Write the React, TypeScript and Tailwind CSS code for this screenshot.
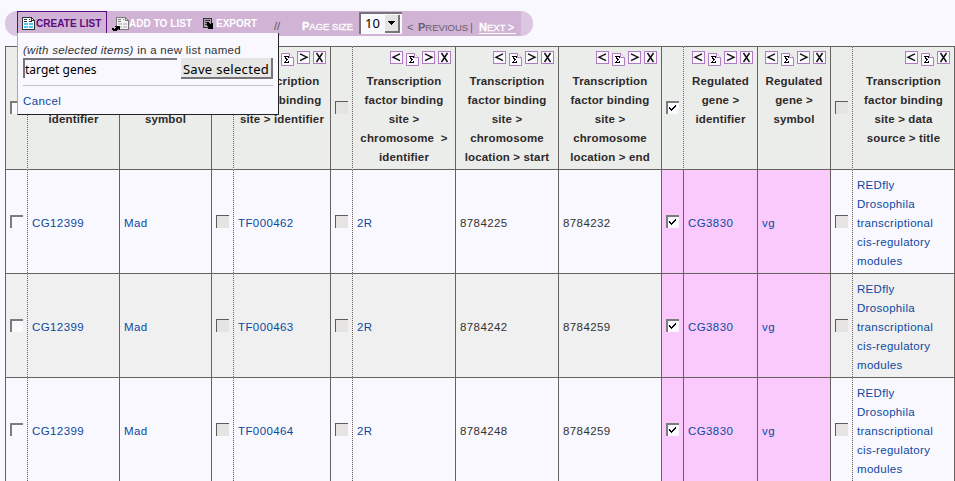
import React from "react";

const SANS = "font-['Liberation_Sans',Arial,sans-serif]";
const UI = "font-['Noto_Sans',sans-serif]";

type CheckState = "open" | "off" | "on";

function Check({ state }: { state: CheckState }) {
  if (state === "off") {
    return <span className="block size-[13px] border-l border-t border-[#5f5b5b] bg-[#e5e4e3]" />;
  }
  return (
    <span className="block size-[13px] border-l-2 border-t-2 border-[#7d7b7c] bg-[#faf9fe]">
      {state === "on" && (
        <svg width="11" height="11" viewBox="0 0 11 11" shapeRendering="crispEdges">
          <path d="M1 4h1v1h1v1h1v-1h1v-1h1v-1h1v-1h1v2h-1v1h-1v1h-1v1h-1v1h-1v-1h-1v-1h-1z" fill="#000" />
        </svg>
      )}
    </span>
  );
}

function Glyph({ kind }: { kind: "left" | "right" | "x" }) {
  return (
    <svg className="block" width="13" height="13" viewBox="0 0 13 13">
      <rect x=".5" y=".5" width="12" height="12" fill="#fbf9ff" stroke="#b07cc0" />
      {kind === "left" && <path d="M10 2.800L3 6.200L10 9.600" fill="none" stroke="#111" strokeWidth="1.4" />}
      {kind === "right" && <path d="M3 2.800L10 6.200L3 9.600" fill="none" stroke="#111" strokeWidth="1.4" />}
      {kind === "x" && <path d="M3.500 2L9.500 11M9.500 2L3.500 11" stroke="#111" strokeWidth="1.5" />}
    </svg>
  );
}

function Sigma() {
  return (
    <svg className="mt-[2px] block" width="13" height="13" viewBox="0 0 13 13">
      <path d="M.5 .5H8.5L12.5 4.5V12.5H.5Z" fill="#fbf9ff" stroke="#b07cc0" />
      <path d="M8.5 .5V4.5H12.5" fill="#fff" stroke="#b07cc0" />
      <path d="M3 3h5v2H7V4H5v1h1v1h1v1H6v1H5v1h2V8h1v2H3V9h1V8h1V6H4V4H3z" fill="#000" shapeRendering="crispEdges" />
    </svg>
  );
}

type Column = {
  check?: CheckState;
  lines?: string[];
  last?: boolean;
  dotted?: boolean;
  pink?: boolean;
};

const columns: Column[] = [
  { check: "open" },
  { lines: ["", "", "identifier"], dotted: true },
  { lines: ["", "", "symbol"] },
  { check: "off" },
  { lines: ["Transcription", "factor binding", "site > identifier"], dotted: true },
  { check: "off" },
  { lines: ["Transcription", "factor binding", "site >", "chromosome  >", "identifier"], dotted: true },
  { lines: ["Transcription", "factor binding", "site >", "chromosome", "location > start"] },
  { lines: ["Transcription", "factor binding", "site >", "chromosome", "location > end"] },
  { check: "on", pink: true },
  { lines: ["Regulated", "gene >", "identifier"], dotted: true, pink: true },
  { lines: ["Regulated", "gene >", "symbol"], pink: true },
  { check: "off" },
  { lines: ["Transcription", "factor binding", "site > data", "source > title"], dotted: true, last: true },
];

const source = ["REDfly", "Drosophila", "transcriptional", "cis-regulatory", "modules"];

const rows = [
  { tf: "TF000462", start: "8784225", end: "8784232" },
  { tf: "TF000463", start: "8784242", end: "8784259" },
  { tf: "TF000464", start: "8784248", end: "8784259" },
];

function HeaderCell({ col }: { col: Column }) {
  const line = col.dotted ? "border-l-transparent" : "border-l-[#67615f]";
  return (
    <div className={`flex border-l border-t border-t-[#67615f] bg-[#ebedea] bg-clip-padding ${line}`}>
      {col.dotted && <DottedLine />}
      {col.check ? (
        <div className="pl-1 pt-[54px]"><Check state={col.check} /></div>
      ) : (
        <div className="flex min-w-0 flex-1 flex-col">
          <div className="flex h-[25px] justify-end gap-[3px] pr-1 pt-1">
            <Glyph kind="left" />
            <Sigma />
            {!col.last && <Glyph kind="right" />}
            <Glyph kind="x" />
          </div>
          <div className="whitespace-pre text-center text-[11.5px] font-bold leading-[19px] tracking-[0.15px] text-[#2e2a2b]">
            {col.lines!.map((l, i) => <div key={i} className="h-[19px]">{l}</div>)}
          </div>
        </div>
      )}
    </div>
  );
}

function DottedLine() {
  return <span className="-ml-px w-px shrink-0 bg-[repeating-linear-gradient(to_bottom,#67615f_0px,#67615f_1px,#f0f0f3_1px,#f0f0f3_2px)]" />;
}

function BodyRow({ row, shaded }: { row: (typeof rows)[number]; shaded: boolean }) {
  const values: (string | string[])[] = [
    "", "CG12399", "Mad", "", row.tf, "", "2R", row.start, row.end, "", "CG3830", "vg", "", source,
  ];
  return (
    <>
      {columns.map((col, i) => {
        const v = values[i];
        const dotted = col.dotted && !col.pink;
        const plain = i === 7 || i === 8;
        const bg = col.pink ? "bg-[#fbcafc]" : shaded ? "bg-[#eff0ef]" : "bg-[#f8f8fe]";
        return (
          <div
            key={i}
            className={`flex border-l border-t border-t-[#67615f] bg-clip-padding ${bg} ${dotted ? "border-l-transparent" : "border-l-[#67615f]"}`}
          >
            {dotted && <DottedLine />}
            {col.check ? (
              <div className="pl-1 pt-[45px]"><Check state={col.check} /></div>
            ) : (
              <div
                className={`flex flex-col justify-center whitespace-nowrap pl-1 pt-[3px] text-[11.5px] leading-[19px] ${
                  plain ? "text-[#333]" : "text-[#0c499f]"
                } ${Array.isArray(v) ? "tracking-[0.3px]" : "tracking-[0.4px]"}`}
              >
                {Array.isArray(v) ? v.map((l) => <div key={l}>{l}</div>) : v}
              </div>
            )}
          </div>
        );
      })}
    </>
  );
}

function ListIcon({ cells }: { cells: string }) {
  return (
    <svg width="13" height="14" viewBox="0 0 13 14" shapeRendering="crispEdges">
      <path d="M.5 .5H9.5L12.5 3.5V12.5H.5Z" fill="#fff" stroke="#333" />
      <path d="M9.5 1V3.5H12" fill="none" stroke="#333" />
      <path d="M2 2.500h3M2 4.500h3M7 2.500h1M7 4.500h3" stroke="#333" />
      <path d="M2 6h4v2H2zM7 6h4v2H7zM2 9h4v2H2zM7 9h4v2H7z" fill={cells} />
    </svg>
  );
}

function Toolbar() {
  return (
    <div className="ml-[5px] mt-[11px] flex h-[25px] w-[528px]">
      <div className="w-3 shrink-0 rounded-l-full bg-[#dcc7e3]" />
      <div className="flex w-[504px] shrink-0 whitespace-nowrap bg-[#d0b3d5] text-[10px] font-bold leading-[26px] text-white">
        <div className="flex h-[22px] w-[90px] shrink-0 border border-b-0 border-[#5d0a80] text-[#5d0a80]">
          <span className="ml-1 mt-[5px] w-[14px] shrink-0"><ListIcon cells="#4cc8f4" /></span>
          <span className="leading-[24px] tracking-[0.05px]">CREATE LIST</span>
        </div>
        <div className="ml-[5px] flex w-[86px] shrink-0">
          <svg className="-mr-px mt-[6px] shrink-0" width="18" height="15" viewBox="0 0 18 15" shapeRendering="crispEdges">
            <path d="M4.500 .5H13.500L16.500 3.500V12.500H4.500Z" fill="#f5f3f5" stroke="#777" />
            <path d="M13.500 1V3.500H16M6 2.500h3M6 4.500h3M11 2.500h1" fill="none" stroke="#777" />
            <path d="M6 6h4v2H6zM11 6h4v2h-4zM6 9h4v2H6zM11 9h4v2h-4z" fill="#ccc" />
            <path d="M0 11h2v1h1v-1h1v-1H3V9h5v4H7v-1H6v1H5v1H1v-1H0z" fill="#000" />
          </svg>
          <span className="tracking-[0.05px]">ADD TO LIST</span>
        </div>
        <div className="ml-[5px] flex w-[70px] shrink-0">
          <svg className="mr-[3px] mt-[7px] shrink-0" width="10" height="11" viewBox="0 0 10 11" shapeRendering="crispEdges">
            <path d="M.5 .5H8.500V9.500H.5Z" fill="#aaa3ac" stroke="#333" />
            <path d="M2 2.500h5M2 4.500h3M2 6.500h3" stroke="#333" />
            <path d="M4 4h2v1h1v1h1V5h2v6H5v-1h1V9H5V8H4z" fill="#000" />
          </svg>
          <span>EXPORT</span>
        </div>
        <div className="flex w-[29px] shrink-0 text-[11px] font-normal leading-[30px] text-[#555]">
          <span className="pl-px">//</span>
        </div>
        <div className="w-[57px] shrink-0 text-[9.5px] font-normal uppercase leading-[31px] [-webkit-text-stroke:0.3px_white]">
          <b className="text-[11px]">P</b>age size
        </div>
        <div className={`mt-px flex h-[22px] w-[43px] shrink-0 border-l-2 border-t-2 border-[#77747a] bg-[#faf9fe] text-[13px] font-normal leading-[19px] text-black ${UI}`}>
          <span className="w-6 pl-1">10</span>
          <span className="mt-px flex h-[18px] w-[15px] items-center justify-center border-b-2 border-r-2 border-[#77747a] bg-[#e4e4e2]">
            <svg width="7" height="4" viewBox="0 0 7 4" shapeRendering="crispEdges"><path d="M0 0H7L3.500 4Z" fill="#000" /></svg>
          </span>
        </div>
        <div className="ml-[5px] flex text-[9.5px] font-normal uppercase leading-[32px] text-[#66606c]">
          <span className="w-[11px] text-[11px]">&lt;</span>
          <span className="w-[52px]"><b className="text-[11px]">P</b>revious</span>
          <span className="w-[9px] text-[11px]">|</span>
          <span className="mt-[9px] h-[14px] w-[37px] border-b border-white leading-[14px] text-white [-webkit-text-stroke:0.3px_white]">
            <b className="text-[11px]">N</b>ext <span className="text-[10.5px]">&gt;</span>
          </span>
        </div>
      </div>
      <div className="w-3 shrink-0 rounded-r-full bg-[#dcc7e3]" />
    </div>
  );
}

function CreatePopup() {
  return (
    <div className="absolute left-[17px] top-[33px] flex h-[82px] w-[262px] flex-col border-b border-l border-r border-b-[#222] border-l-[#aaa] border-r-[#222] bg-[#f8f8fe] px-[5px] pt-[8px]">
      <div className="h-[17px] whitespace-nowrap text-[11.5px] leading-[19px] tracking-[0.28px] text-[#333]">
        <i>(with selected items)</i> in a new list named
      </div>
      <div className={`flex justify-between text-[12px] text-black ${UI}`}>
        <div className="h-[20px] w-[154px] whitespace-nowrap border-l-2 border-t-2 border-[#77757a] leading-[20px]">target genes</div>
        <div className="h-[21px] w-[92px] whitespace-nowrap border-b-2 border-r-2 border-[#77757a] bg-[#e6e6e4] text-center text-[13px] leading-[22px] tracking-[0.3px]">Save selected</div>
      </div>
      <div className="mt-[6px] h-px bg-[#c4c4c6]" />
      <div className="mt-[6px] text-[11.5px] leading-[19px] tracking-[0.4px] text-[#0c499f]">Cancel</div>
    </div>
  );
}

export default function App() {
  return (
    <div className={`relative flex h-[481px] w-[955px] flex-col overflow-hidden bg-[#f8f8fe] ${SANS}`}>
      <Toolbar />
      <div className="ml-[5px] mt-[10px] grid w-[950px] shrink-0 grid-cols-[22px_92px_92px_22px_97px_22px_103px_103px_103px_22px_74px_73px_22px_102px] grid-rows-[123px_104px_104px_104px] border-r border-[#67615f]">
        {columns.map((c, i) => <HeaderCell key={i} col={c} />)}
        {rows.map((r, i) => <BodyRow key={r.tf} row={r} shaded={i === 1} />)}
      </div>
      <CreatePopup />
    </div>
  );
}
